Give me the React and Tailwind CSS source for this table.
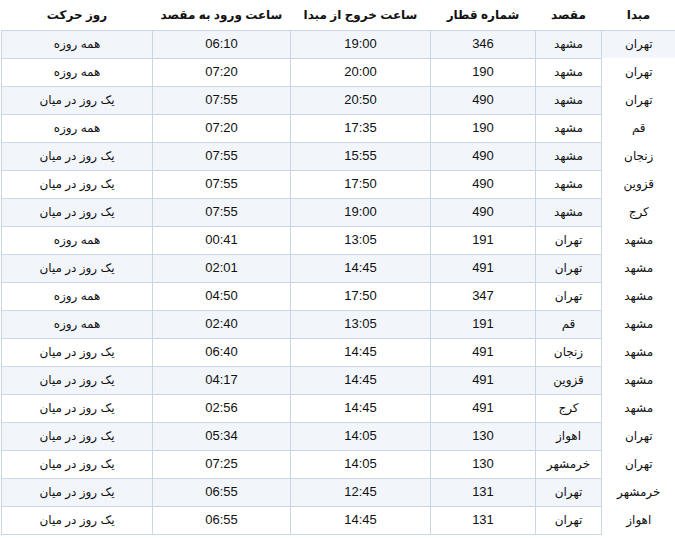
import React from 'react';

const rows = [
  ['تهران', 'مشهد', '346', '19:00', '06:10', 'همه روزه'],
  ['تهران', 'مشهد', '190', '20:00', '07:20', 'همه روزه'],
  ['تهران', 'مشهد', '490', '20:50', '07:55', 'یک روز در میان'],
  ['قم', 'مشهد', '190', '17:35', '07:20', 'همه روزه'],
  ['زنجان', 'مشهد', '490', '15:55', '07:55', 'یک روز در میان'],
  ['قزوین', 'مشهد', '490', '17:50', '07:55', 'یک روز در میان'],
  ['کرج', 'مشهد', '490', '19:00', '07:55', 'یک روز در میان'],
  ['مشهد', 'تهران', '191', '13:05', '00:41', 'همه روزه'],
  ['مشهد', 'تهران', '491', '14:45', '02:01', 'یک روز در میان'],
  ['مشهد', 'تهران', '347', '17:50', '04:50', 'همه روزه'],
  ['مشهد', 'قم', '191', '13:05', '02:40', 'همه روزه'],
  ['مشهد', 'زنجان', '491', '14:45', '06:40', 'یک روز در میان'],
  ['مشهد', 'قزوین', '491', '14:45', '04:17', 'یک روز در میان'],
  ['مشهد', 'کرج', '491', '14:45', '02:56', 'یک روز در میان'],
  ['تهران', 'اهواز', '130', '14:05', '05:34', 'یک روز در میان'],
  ['تهران', 'خرمشهر', '130', '14:05', '07:25', 'یک روز در میان'],
  ['خرمشهر', 'تهران', '131', '12:45', '06:55', 'یک روز در میان'],
  ['اهواز', 'تهران', '131', '14:45', '06:55', 'یک روز در میان'],
];

const headers = ['مبدا', 'مقصد', 'شماره قطار', 'ساعت خروج از مبدا', 'ساعت ورود به مقصد', 'روز حرکت'];
const widths = ['w-[74px]', 'w-[66px]', 'w-[105px]', 'w-[140px]', 'w-[138px]', 'w-[151px]'];

function App() {
  return (
    <div className="bg-white w-[675px] h-[538px] overflow-hidden pl-px" style={{ fontFamily: '"Liberation Sans", "DejaVu Sans", sans-serif' }}>
      <table dir="rtl" className="w-[674px] border-collapse table-fixed text-[#111]">
        <thead>
          <tr className="h-[30px]">
            {headers.map((h, i) => (
              <th key={i} className={`${widths[i]} text-center font-bold text-[12px] p-0 align-middle`}>{h}</th>
            ))}
          </tr>
        </thead>
        <tbody>
          {rows.map((r, ri) => {
            const striped = ri % 2 === 0;
            return (
              <tr key={ri} className="h-[28px]">
                <td className={`text-center text-[12px] p-0 ${ri === 0 ? 'border-t border-[#c9d6e6] bg-[#f2f6fb]' : ''}`}>{r[0]}</td>
                {r.slice(1).map((c, ci) => (
                  <td
                    key={ci}
                    className={`border border-[#c9d6e6] text-center p-0 ${striped ? 'bg-[#f2f6fb]' : 'bg-white'} ${ci === 0 || ci === 4 ? 'text-[12px]' : 'text-[13px]'}`}
                  >
                    {c}
                  </td>
                ))}
              </tr>
            );
          })}
        </tbody>
      </table>
    </div>
  );
}

export default App;
